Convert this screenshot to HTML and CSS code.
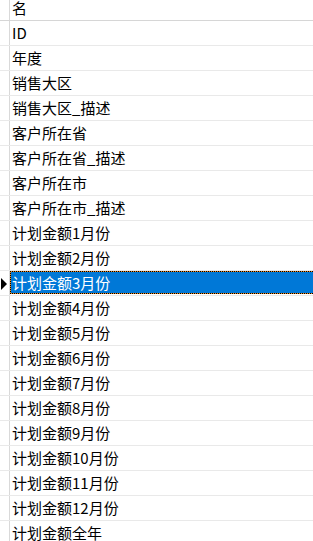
FILE: index.html
```html
<!DOCTYPE html>
<html lang="zh">
<head>
<meta charset="utf-8">
<link rel="stylesheet" href="styles.css">
</head>
<body>
<div class="grid">
  <div class="row head"><div class="ind"></div><div class="cell">名</div></div>
  <div class="row"><div class="ind"></div><div class="cell">ID</div></div>
  <div class="row"><div class="ind"></div><div class="cell">年度</div></div>
  <div class="row"><div class="ind"></div><div class="cell">销售大区</div></div>
  <div class="row"><div class="ind"></div><div class="cell">销售大区_描述</div></div>
  <div class="row"><div class="ind"></div><div class="cell">客户所在省</div></div>
  <div class="row"><div class="ind"></div><div class="cell">客户所在省_描述</div></div>
  <div class="row"><div class="ind"></div><div class="cell">客户所在市</div></div>
  <div class="row"><div class="ind"></div><div class="cell">客户所在市_描述</div></div>
  <div class="row"><div class="ind"></div><div class="cell">计划金额1月份</div></div>
  <div class="row"><div class="ind"></div><div class="cell">计划金额2月份</div></div>
  <div class="row selected"><div class="ind"><span class="arrow"></span></div><div class="cell">计划金额3月份</div></div>
  <div class="row"><div class="ind"></div><div class="cell">计划金额4月份</div></div>
  <div class="row"><div class="ind"></div><div class="cell">计划金额5月份</div></div>
  <div class="row"><div class="ind"></div><div class="cell">计划金额6月份</div></div>
  <div class="row"><div class="ind"></div><div class="cell">计划金额7月份</div></div>
  <div class="row"><div class="ind"></div><div class="cell">计划金额8月份</div></div>
  <div class="row"><div class="ind"></div><div class="cell">计划金额9月份</div></div>
  <div class="row"><div class="ind"></div><div class="cell">计划金额10月份</div></div>
  <div class="row"><div class="ind"></div><div class="cell">计划金额11月份</div></div>
  <div class="row"><div class="ind"></div><div class="cell">计划金额12月份</div></div>
  <div class="row"><div class="ind"></div><div class="cell">计划金额全年</div></div>
</div>
</body>
</html>
```

FILE: styles.css
```css
html, body {
  margin: 0;
  padding: 0;
  background: #ffffff;
  overflow: hidden;
}
body {
  font-family: "Noto Sans CJK SC", "Noto Sans", sans-serif;
  font-size: 15px;
  color: #000000;
}
.grid {
  display: flex;
  flex-direction: column;
  width: 313px;
}
.row {
  display: flex;
  height: 24px;
  border-bottom: 1px solid #e9e9e9;
}
.row.head {
  height: 20px;
  border-bottom: 1px solid #d6d6d6;
}
.row.head .cell {
  align-items: flex-start;
  line-height: 16px;
}
.ind {
  width: 9px;
  flex: none;
  border-right: 1px solid #d9d9d9;
  display: flex;
  align-items: center;
}
.cell {
  flex: 1;
  display: flex;
  align-items: center;
  padding-left: 2px;
  line-height: 24px;
  white-space: nowrap;
}
.selected .cell {
  color: #ffffff;
  padding-left: 1px;
  border-left: 1px solid transparent;
  background:
    repeating-linear-gradient(90deg, #000 0 1px, #f08a1c 1px 2px) top left / 100% 1px no-repeat,
    repeating-linear-gradient(90deg, #000 0 1px, #f08a1c 1px 2px) bottom left / 100% 1px no-repeat,
    repeating-linear-gradient(180deg, #000 0 1px, #f08a1c 1px 2px) top left / 1px 100% no-repeat,
    #0078d7;
  background-origin: border-box;
  margin-bottom: 1px;
  margin-left: 0;
}
.arrow {
  display: block;
  width: 0;
  height: 0;
  margin-left: 1px;
  margin-top: 1px;
  border-top: 6px solid transparent;
  border-bottom: 6px solid transparent;
  border-left: 6px solid #000;
}
```
